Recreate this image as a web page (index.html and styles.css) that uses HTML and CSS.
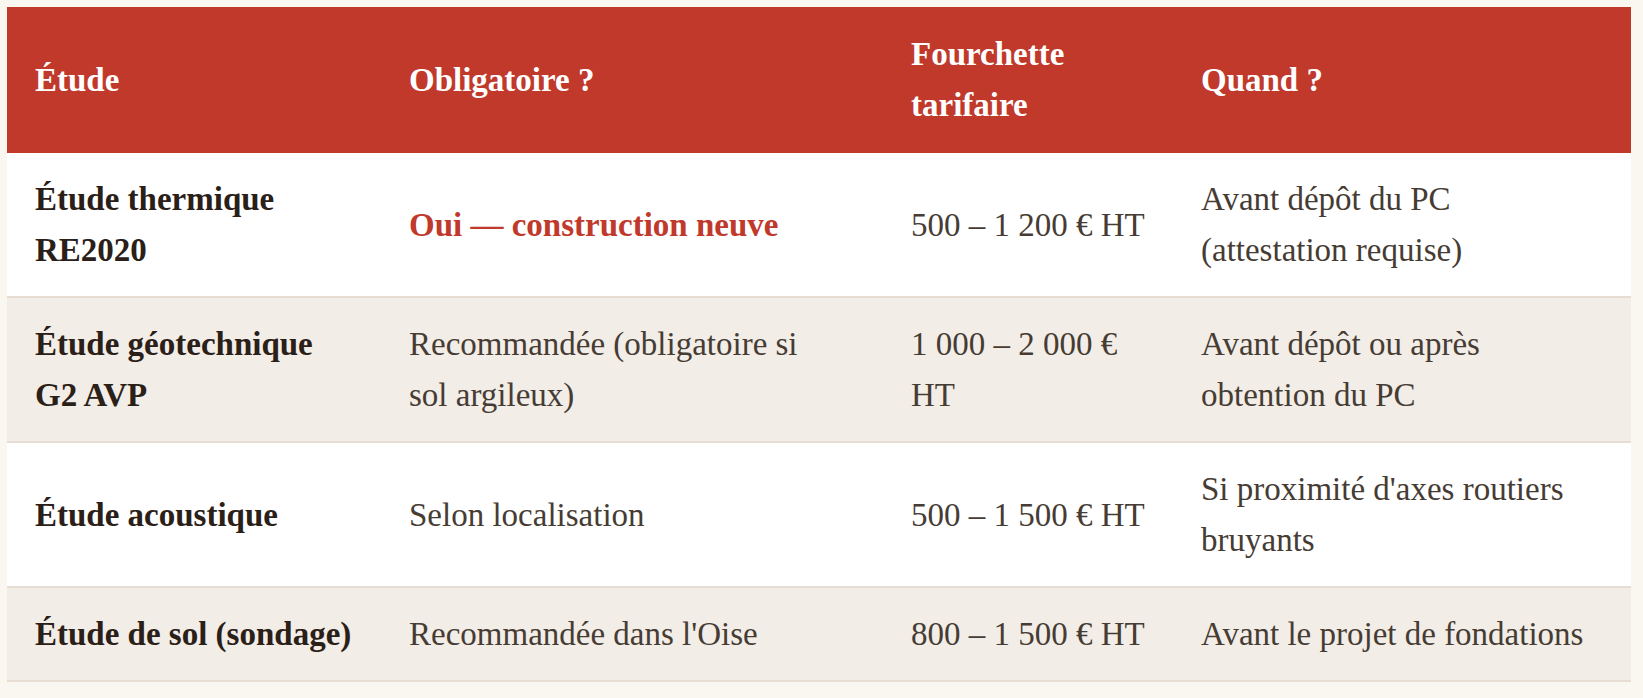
FILE: index.html
```html
<!DOCTYPE html>
<html lang="fr">
<head>
<meta charset="utf-8">
<title>Études</title>
<link rel="stylesheet" href="styles.css">
</head>
<body>
<div class="wrap">
  <table class="studies">
    <colgroup>
      <col class="c-name">
      <col class="c-req">
      <col class="c-price">
      <col class="c-when">
    </colgroup>
    <thead>
      <tr>
        <th class="col-name">Étude</th>
        <th class="col-req">Obligatoire ?</th>
        <th class="col-price">Fourchette tarifaire</th>
        <th class="col-when">Quand ?</th>
      </tr>
    </thead>
    <tbody>
      <tr>
        <td class="col-name">Étude thermique RE2020</td>
        <td class="col-req"><span class="yes">Oui — construction neuve</span></td>
        <td class="col-price">500 – 1&nbsp;200&nbsp;€ HT</td>
        <td class="col-when">Avant dépôt du PC (attestation requise)</td>
      </tr>
      <tr>
        <td class="col-name">Étude géotechnique G2 AVP</td>
        <td class="col-req">Recommandée (obligatoire si sol argileux)</td>
        <td class="col-price">1&nbsp;000 – 2&nbsp;000&nbsp;€ HT</td>
        <td class="col-when">Avant dépôt ou après obtention du PC</td>
      </tr>
      <tr>
        <td class="col-name">Étude acoustique</td>
        <td class="col-req">Selon localisation</td>
        <td class="col-price">500 – 1&nbsp;500&nbsp;€ HT</td>
        <td class="col-when">Si proximité d'axes routiers bruyants</td>
      </tr>
      <tr>
        <td class="col-name">Étude de sol (sondage)</td>
        <td class="col-req">Recommandée dans l'Oise</td>
        <td class="col-price">800 – 1&nbsp;500&nbsp;€ HT</td>
        <td class="col-when">Avant le projet de fondations</td>
      </tr>
    </tbody>
  </table>
</div>
</body>
</html>
```
FILE: styles.css
```css
html, body {
  margin: 0;
  padding: 0;
  background: #faf7f1;
}

body {
  font-family: "Liberation Serif", "Times New Roman", serif;
  color: #463c34;
}

.wrap {
  padding: 7px;
}

.studies {
  width: 1624px;
  table-layout: fixed;
  border-collapse: collapse;
  font-size: 33px;
  line-height: 51px;
}

.c-name { width: 374px; }
.c-req { width: 502px; }
.c-price { width: 290px; }
.c-when { width: 458px; }

.studies th {
  background: #c0392b;
  color: #ffffff;
  font-weight: 700;
  text-align: left;
  vertical-align: middle;
  padding: 22px 28px;
}

.studies td {
  padding: 21px 28px 20px;
  vertical-align: middle;
  border-bottom: 2px solid #e8ddd2;
  background: #ffffff;
}

.studies tbody tr:nth-child(even) td {
  background: #f2ede6;
}

.studies td.col-name {
  font-weight: 700;
  color: #2a2018;
  padding-right: 24px;
}

.studies .col-req { padding-right: 62px; }
.studies .col-price { padding-right: 12px; }
.studies .col-when { padding-right: 34px; }

.yes {
  color: #c0392b;
  font-weight: 700;
}
```
